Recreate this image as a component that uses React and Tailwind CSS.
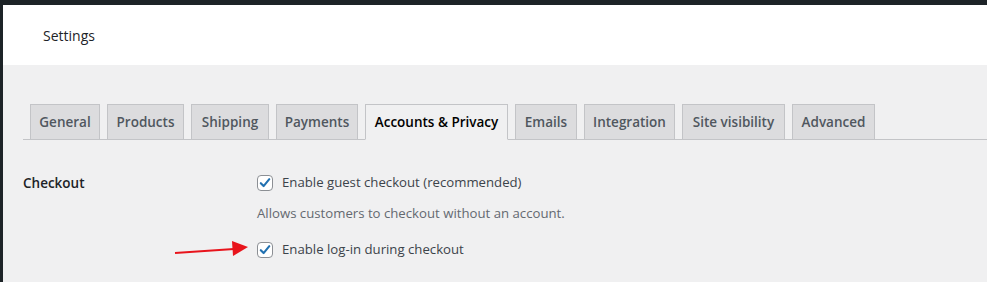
import React from 'react';

// ─── Data ─────────────────────────────────────────────────────
const tabs = [
  { label: 'General', w: 'w-[70px]' },
  { label: 'Products', w: 'w-[77px]' },
  { label: 'Shipping', w: 'w-[78px]' },
  { label: 'Payments', w: 'w-[82px]' },
  { label: 'Accounts & Privacy', w: 'w-[143px]', active: true },
  { label: 'Emails', w: 'w-[62px]' },
  { label: 'Integration', w: 'w-[91px]' },
  { label: 'Site visibility', w: 'w-[103px]' },
  { label: 'Advanced', w: 'w-[83px]' },
];

const font = { fontFamily: '"Open Sans", "Noto Sans", sans-serif' };

// ─── Checkbox ─────────────────────────────────────────────────
const Checkbox = () => (
  <span className="w-4 h-4 shrink-0 rounded-[4px] border border-[#8c8f94] bg-white flex items-center justify-center">
    <svg width="14" height="14" viewBox="0 0 14 14">
      <path d="M2.8 7.2 L5.6 10.1 L11.3 3.2" fill="none" stroke="#2271b1" strokeWidth="2.1" strokeLinecap="round" strokeLinejoin="round" />
    </svg>
  </span>
);

// ─── Main ─────────────────────────────────────────────────────
const App = () => {
  return (
    <div className="relative w-[987px] h-[282px] overflow-hidden bg-[#1d2327] flex flex-col" style={font}>
      <div className="h-[5px] shrink-0" />
      <div className="flex flex-1 ml-[3px] flex-col">
        {/* Header */}
        <div className="h-[60px] bg-white flex items-center pl-[40px] shrink-0">
          <h1 className="text-[14px] text-[#1d2327]">Settings</h1>
        </div>

        {/* Body */}
        <div className="flex-1 bg-[#f0f0f1] pl-[20px] pt-[39px]">
          <nav className="flex items-end border-b border-[#c3c4c7]">
            {tabs.map((t) => (
              <a
                key={t.label}
                href="#"
                className={`${t.w} h-[36px] ml-[7px] mb-[-1px] border flex items-center justify-center text-[13.5px] font-semibold whitespace-nowrap ${
                  t.active
                    ? 'bg-[#f0f0f1] border-[#c3c4c7] border-b-[#f0f0f1] text-black'
                    : 'bg-[#dcdcde] border-[#c3c4c7] text-[#50575e]'
                }`}
              >
                {t.label}
              </a>
            ))}
          </nav>

          {/* Checkout options */}
          <div className="flex mt-[35px]">
            <div className="w-[234px] shrink-0 h-4 flex items-center text-[13.5px] font-semibold text-[#1d2327]">
              Checkout
            </div>
            <div className="flex flex-col">
              <label className="flex items-center gap-[9px] h-4 text-[13.2px] text-[#3c434a]">
                <Checkbox />
                Enable guest checkout (recommended)
              </label>
              <p className="mt-[12px] leading-5 text-[13.2px] text-[#646970]">
                Allows customers to checkout without an account.
              </p>
              <label className="mt-[19px] flex items-center gap-[9px] h-4 text-[13.2px] text-[#3c434a]">
                <Checkbox />
                Enable log-in during checkout
              </label>
            </div>
          </div>
        </div>
      </div>

      {/* Red annotation arrow */}
      <svg className="absolute left-[170px] top-[236px]" width="84" height="24" viewBox="0 0 84 24">
        <path d="M5 17 L64 13" stroke="#e8141c" strokeWidth="2" fill="none" />
        <path d="M62 5 L78 11 L63 20 Z" fill="#e8141c" />
      </svg>
    </div>
  );
};

export default App;
